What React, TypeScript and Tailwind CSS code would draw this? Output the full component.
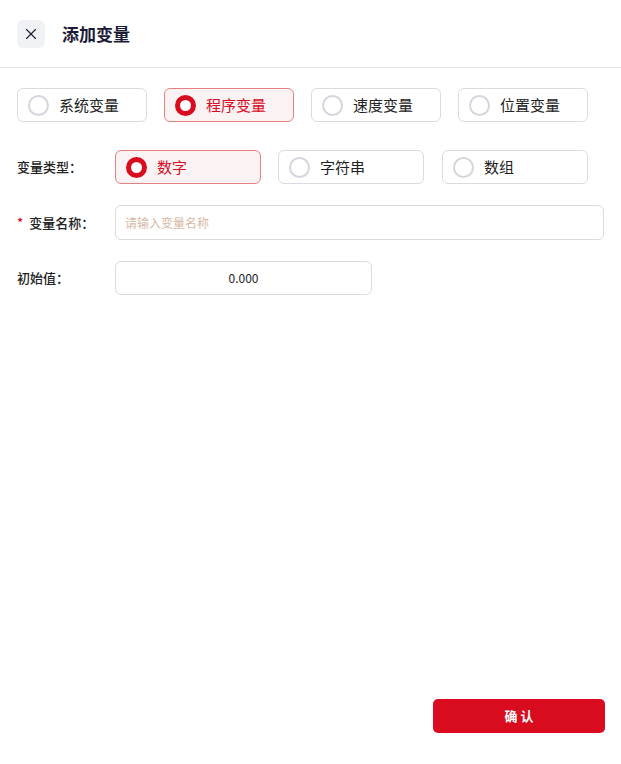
import { X } from "lucide-react";

type Opt = { label: string; checked?: boolean };

function Radio({ label, checked, w }: Opt & { w: string }) {
  return (
    <div
      className={`flex h-[34px] ${w} items-center gap-[10px] rounded-[6px] border pl-[10px] ${
        checked ? "border-[#e4827f] bg-[#fbf3f3]" : "border-[#d9dbe0] bg-white"
      }`}
    >
      {checked ? (
        <span className="h-[21px] w-[21px] rounded-full border-[5px] border-[#d90b1f] bg-white" />
      ) : (
        <span className="h-[21px] w-[21px] rounded-full border-[2px] border-[#d3d6dd] bg-white" />
      )}
      <span className={`text-[15px] ${checked ? "text-[#d90b1f]" : "text-[#222]"}`}>{label}</span>
    </div>
  );
}

export default function App() {
  const scopes: Opt[] = [
    { label: "系统变量" },
    { label: "程序变量", checked: true },
    { label: "速度变量" },
    { label: "位置变量" },
  ];
  const types: Opt[] = [{ label: "数字", checked: true }, { label: "字符串" }, { label: "数组" }];

  return (
    <div
      className="flex h-[764px] w-[621px] flex-col bg-white"
      style={{ fontFamily: '"Noto Sans CJK SC", "Noto Sans", sans-serif' }}
    >
      <div className="flex h-[68px] items-center gap-[17px] border-b border-[#e3e3e3] px-[17px]">
        <button className="flex h-[28px] w-[28px] items-center justify-center rounded-[6px] bg-[#f1f2f5] text-[#1b1b36]">
          <X size={18} strokeWidth={1.5} />
        </button>
        <h1 className="text-[17px] font-bold text-[#1b1b36]">添加变量</h1>
      </div>

      <div className="flex flex-col px-[17px] pt-[20px]">
        <div className="flex gap-[17px]">
          {scopes.map((s) => (
            <Radio key={s.label} {...s} w="w-[130px]" />
          ))}
        </div>

        <div className="mt-[28px] flex items-center">
          <span className="w-[98px] text-[13px] font-medium text-[#222]">变量类型：</span>
          <div className="flex gap-[17px]">
            {types.map((t, i) => (
              <Radio key={t.label} {...t} w={i === 2 ? "w-[146px] ml-[1px]" : "w-[146px]"} />
            ))}
          </div>
        </div>

        <div className="mt-[21px] flex items-center">
          <span className="w-[98px] text-[13px] font-medium text-[#222]">
            <span className="mr-[6px] text-[#d90b1f]">*</span>变量名称：
          </span>
          <input
            placeholder="请输入变量名称"
            className="h-[35px] flex-1 rounded-[6px] border border-[#d9dbe0] px-[9px] text-[12px] outline-none placeholder:text-[#d7b9a4]"
          />
        </div>

        <div className="mt-[21px] flex items-center">
          <span className="w-[98px] text-[13px] font-medium text-[#222]">初始值：</span>
          <div className="flex h-[34px] w-[257px] items-center justify-center rounded-[6px] border border-[#d9dbe0] text-[12px] text-[#222]">
            0.000
          </div>
        </div>
      </div>

      <div className="mt-auto flex justify-end px-[16px] pb-[31px]">
        <button className="h-[34px] w-[172px] rounded-[5px] bg-[#d90b1f] text-[13px] font-bold text-white">
          确 认
        </button>
      </div>
    </div>
  );
}
